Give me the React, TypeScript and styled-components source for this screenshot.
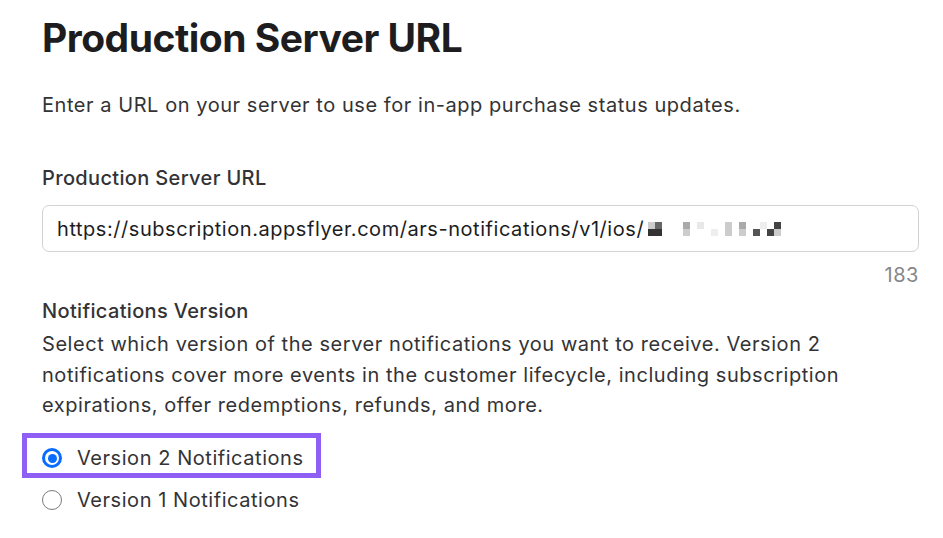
import {ReactElement} from "react";
import styled, {createGlobalStyle} from "styled-components";

const GlobalStyle = createGlobalStyle`
    html, body {
        margin: 0;
        padding: 0;
        background: #ffffff;
    }

    body {
        font-family: Inter, "Noto Sans", "Liberation Sans", sans-serif;
        color: #333336;
    }
`;

const StyledPage = styled.div`
    width: 943px;
    height: 538px;
    box-sizing: border-box;
    padding: 14px 24px 0 42px;
    overflow: hidden;
`;

const StyledTitle = styled.h1`
    margin: 0;
    font-size: 39px;
    line-height: 48px;
    font-weight: 700;
    color: #1d1d1f;
    letter-spacing: -0.5px;
`;

const StyledText = styled.p`
    margin: 0;
    font-size: 20px;
    line-height: 28px;
    letter-spacing: 0.55px;
    color: #333336;
`;

const StyledLead = styled(StyledText)`
    margin-top: 29px;
`;

const StyledLabel = styled(StyledText)`
    font-weight: 500;
    letter-spacing: 0.35px;
`;

const StyledFieldGroup = styled.div`
    margin-top: 45px;
    display: flex;
    flex-direction: column;
`;

const StyledInput = styled.div`
    margin-top: 13px;
    height: 47px;
    box-sizing: border-box;
    border: 1px solid #d2d2d7;
    border-radius: 7px;
    padding: 0 14px;
    display: flex;
    align-items: center;
    gap: 4px;
    font-size: 20px;
    letter-spacing: 0.55px;
    color: #1d1d1f;
`;

const StyledCounter = styled(StyledText)`
    align-self: flex-end;
    margin-top: 9px;
    color: #86868b;
`;

const StyledVersionGroup = styled.div`
    margin-top: 8px;
`;

const StyledHelp = styled(StyledText)`
    margin-top: 4px;
    line-height: 30.5px;
    max-width: 830px;
`;

const StyledOptions = styled.div`
    margin: 12px 0 0 -20px;
    display: flex;
    flex-direction: column;
    align-items: flex-start;
`;

const StyledOption = styled.label<{ $highlighted?: boolean }>`
    display: flex;
    align-items: center;
    gap: 15px;
    height: 45px;
    box-sizing: border-box;
    padding: 6px 12px 0 15px;
    margin-top: ${props => props.$highlighted ? "0" : "-3px"};
    border: 5px solid ${props => props.$highlighted ? "#8f5ef5" : "transparent"};
    font-size: 20px;
    letter-spacing: 0.55px;
    color: #333336;
    cursor: pointer;
`;

const StyledRadio = styled.span<{ $checked?: boolean }>`
    width: 20px;
    height: 20px;
    flex-shrink: 0;
    box-sizing: border-box;
    border-radius: 50%;
    border: ${props => props.$checked ? "3px solid #0a6cff" : "1.5px solid #7a7a7e"};
    display: flex;
    align-items: center;
    justify-content: center;

    &::after {
        content: "";
        width: 9px;
        height: 9px;
        border-radius: 50%;
        background: #0a6cff;
        display: ${props => props.$checked ? "block" : "none"};
    }
`;

const blocks: [number, number, string][] = [
    [0, 0, "#cccccc"], [7, 0, "#666666"], [35, 0, "#aaaaaa"], [49, 0, "#e8e8e8"],
    [77, 0, "#cccccc"], [91, 0, "#aaaaaa"], [112, 0, "#eeeeee"], [126, 0, "#444444"],
    [0, 7, "#333333"], [7, 7, "#333333"], [35, 7, "#cccccc"], [63, 7, "#eeeeee"],
    [77, 7, "#cccccc"], [91, 7, "#cccccc"], [105, 7, "#555555"], [119, 7, "#444444"],
    [126, 7, "#cccccc"],
];

const Redacted = (): ReactElement => (
    <svg width="133" height="14" viewBox="0 0 133 14">
        {blocks.map(([x, y, c], i) => (
            <rect key={i} x={x} y={y} width="7" height="7" fill={c} />
        ))}
    </svg>
);

const App = (): ReactElement => {
    return (
        <>
            <GlobalStyle />
            <StyledPage>
                <StyledTitle>Production Server URL</StyledTitle>
                <StyledLead>Enter a URL on your server to use for in-app purchase status updates.</StyledLead>

                <StyledFieldGroup>
                    <StyledLabel>Production Server URL</StyledLabel>
                    <StyledInput>
                        <span>https://subscription.appsflyer.com/ars-notifications/v1/ios/</span>
                        <Redacted />
                    </StyledInput>
                    <StyledCounter>183</StyledCounter>
                </StyledFieldGroup>

                <StyledVersionGroup>
                    <StyledLabel>Notifications Version</StyledLabel>
                    <StyledHelp>
                        Select which version of the server notifications you want to receive. Version 2
                        notifications cover more events in the customer lifecycle, including subscription
                        expirations, offer redemptions, refunds, and more.
                    </StyledHelp>
                    <StyledOptions>
                        <StyledOption $highlighted>
                            <StyledRadio $checked />
                            Version 2 Notifications
                        </StyledOption>
                        <StyledOption>
                            <StyledRadio />
                            Version 1 Notifications
                        </StyledOption>
                    </StyledOptions>
                </StyledVersionGroup>
            </StyledPage>
        </>
    );
};

export default App;
